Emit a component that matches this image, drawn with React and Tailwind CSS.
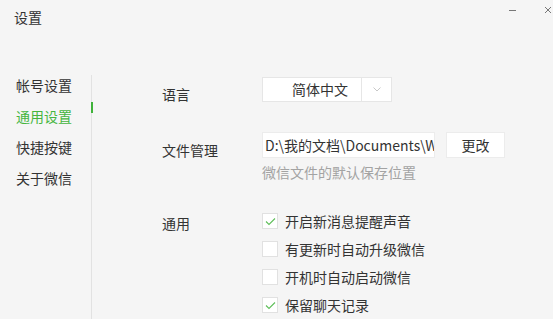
const NAV = ['帐号设置', '通用设置', '快捷按键', '关于微信'];

const OPTIONS = [
  { label: '开启新消息提醒声音', checked: true },
  { label: '有更新时自动升级微信', checked: false },
  { label: '开机时自动启动微信', checked: false },
  { label: '保留聊天记录', checked: true },
];

function Checkbox({ checked }) {
  return (
    <span className="w-4 h-4 flex items-center justify-center bg-white border border-[#e1e1e1]">
      {checked && (
        <svg width="11" height="9" viewBox="0 0 11 9" fill="none" stroke="#5fbf5a" strokeWidth="1.1">
          <path d="M1 4.5l3 3L10 1.5" />
        </svg>
      )}
    </span>
  );
}

export default function App() {
  return (
    <div
      className="w-[553px] h-[319px] bg-[#f5f5f5] text-[#333] flex flex-col overflow-hidden"
      style={{ fontFamily: '"Noto Sans CJK SC", "Microsoft YaHei", sans-serif' }}
    >
      {/* Title bar */}
      <div className="h-[80px] flex items-start justify-between pl-[14px] pr-[1px]">
        <span className="mt-[9px] text-[14px] leading-4">设置</span>
        <div className="flex items-center gap-[28px] mt-[6px]">
          <svg width="7" height="7" viewBox="0 0 7 7" stroke="#777" strokeWidth="1">
            <path d="M0 3.5h7" />
          </svg>
          <svg width="8" height="8" viewBox="0 0 8 8" stroke="#777" strokeWidth="1">
            <path d="M1 1l6 6M7 1L1 7" />
          </svg>
        </div>
      </div>

      <div className="flex-1 flex">
        {/* Sidebar */}
        <aside className="w-[92px] border-r border-[#e2e2e2] flex flex-col gap-[15px] pl-[16px] pt-[2px]">
          {NAV.map((item) => (
            <div
              key={item}
              className={`relative h-4 leading-4 text-[14px] ${item === '通用设置' ? 'text-[#46b53f]' : ''}`}
            >
              {item}
              {item === '通用设置' && (
                <span className="absolute right-[-2px] top-[-6px] w-[2px] h-[11px] bg-[#3fb23a]" />
              )}
            </div>
          ))}
        </aside>

        {/* Content */}
        <main className="flex-1 flex flex-col pl-[70px] text-[14px]">
          <div className="flex mt-[2px]">
            <span className="w-[100px] mt-[9px] leading-4">语言</span>
            <div className="w-[130px] h-[25px] flex bg-white border border-[#e6e6e6]">
              <span className="flex-1 pl-[29px] leading-[23px]">简体中文</span>
              <span className="w-[30px] border-l border-[#e6e6e6] flex items-center justify-center">
                <svg width="8" height="5" viewBox="0 0 8 5" fill="none" stroke="#c8c8c8" strokeWidth="1">
                  <path d="M0.5 0.5L4 4l3.5-3.5" />
                </svg>
              </span>
            </div>
          </div>

          <div className="flex mt-[30px]">
            <span className="w-[100px] mt-[10px] leading-4">文件管理</span>
            <div className="flex flex-col">
              <div className="flex gap-[11px]">
                <div className="w-[173px] h-[26px] bg-white border border-[#ececec] pl-[2px] leading-[24px] whitespace-nowrap overflow-hidden">
                  D:\我的文档\Documents\W
                </div>
                <button className="w-[59px] h-[26px] bg-white border border-[#ececec] leading-[24px]">
                  更改
                </button>
              </div>
              <span className="mt-[6px] leading-4 text-[#a3a3a3]">微信文件的默认保存位置</span>
            </div>
          </div>

          <div className="flex mt-[27px]">
            <span className="w-[100px] mt-[8px] leading-4">通用</span>
            <div className="flex flex-col">
              {OPTIONS.map((o) => (
                <label key={o.label} className="h-[28px] flex items-center gap-[7px]">
                  <Checkbox checked={o.checked} />
                  <span className="leading-4">{o.label}</span>
                </label>
              ))}
            </div>
          </div>
        </main>
      </div>
    </div>
  );
}
